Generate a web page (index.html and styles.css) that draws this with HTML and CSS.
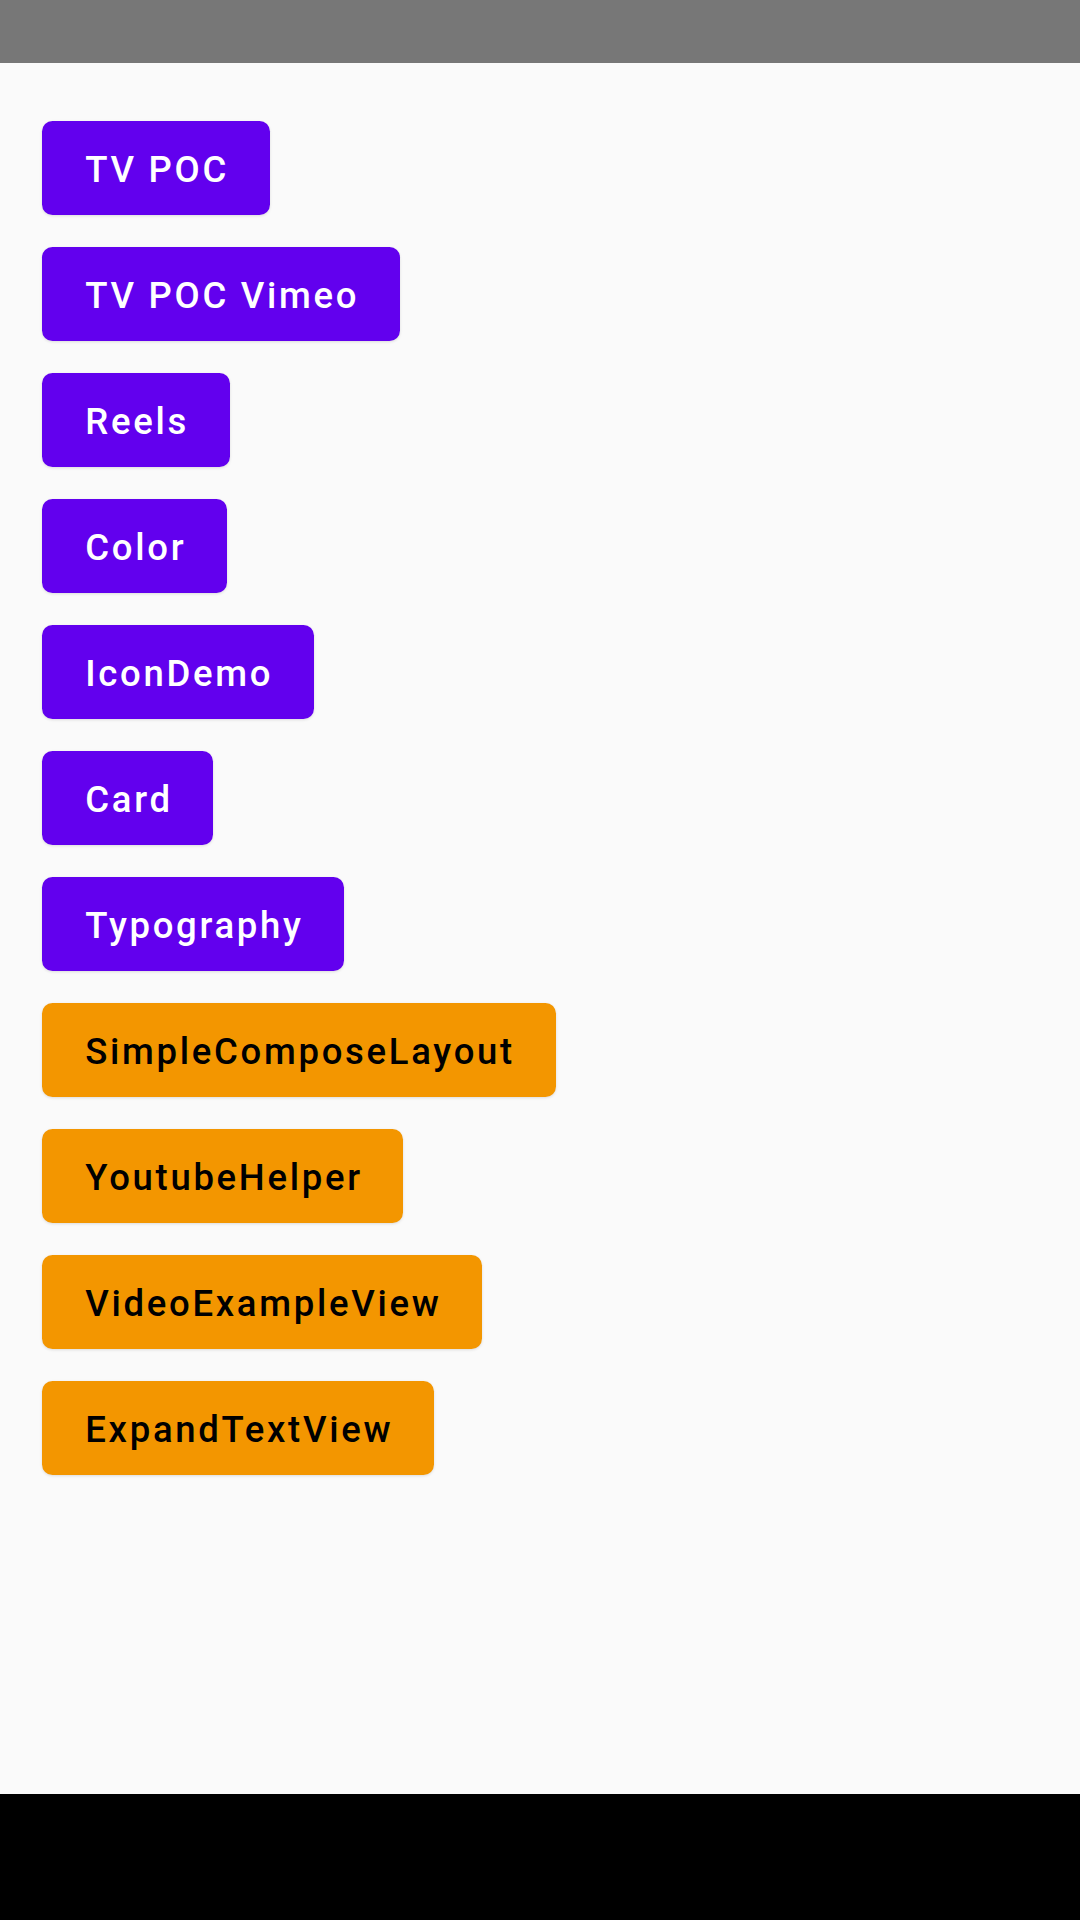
FILE: index.html
```html
<!DOCTYPE html>
<html>
<head>
<meta charset="utf-8">
<link rel="stylesheet" href="styles.css">
</head>
<body>
<div class="screen">
  <div class="status-bar"></div>
  <main class="content">
    <div class="btn-wrap"><button class="btn primary">TV POC</button></div>
    <div class="btn-wrap"><button class="btn primary">TV POC Vimeo</button></div>
    <div class="btn-wrap"><button class="btn primary">Reels</button></div>
    <div class="btn-wrap"><button class="btn primary">Color</button></div>
    <div class="btn-wrap"><button class="btn primary">IconDemo</button></div>
    <div class="btn-wrap"><button class="btn primary">Card</button></div>
    <div class="btn-wrap"><button class="btn primary">Typography</button></div>
    <div class="btn-wrap"><button class="btn orange">SimpleComposeLayout</button></div>
    <div class="btn-wrap"><button class="btn orange">YoutubeHelper</button></div>
    <div class="btn-wrap"><button class="btn orange">VideoExampleView</button></div>
    <div class="btn-wrap"><button class="btn orange">ExpandTextView</button></div>
  </main>
  <div class="nav-bar"></div>
</div>
</body>
</html>
```

FILE: styles.css
```css
html, body {
  margin: 0;
  padding: 0;
}
body {
  width: 1080px;
  height: 1920px;
  background: #fafafa;
  font-family: Roboto, "Noto Sans", sans-serif;
}
.screen {
  display: flex;
  flex-direction: column;
  height: 1920px;
}
.status-bar {
  height: 63px;
  background: #777777;
  flex: none;
}
.content {
  flex: 1;
  display: flex;
  flex-direction: column;
  align-items: flex-start;
  padding: 42px;
  background: #fafafa;
}
.btn-wrap {
  padding: 15.75px 0;
}
.btn {
  display: inline-flex;
  align-items: center;
  justify-content: center;
  box-sizing: border-box;
  height: 94.5px;
  padding: 4px 40.7px 0 43.3px;
  border: none;
  border-radius: 10.5px;
  font-family: Roboto, "Noto Sans", sans-serif;
  font-weight: 500;
  font-size: 36.5px;
  letter-spacing: 2.7px;
  line-height: 1;
  box-shadow: 0 1px 3px rgba(0,0,0,0.12);
}
.primary {
  background: #6200ee;
  color: #ffffff;
}
.orange {
  background: #f39600;
  color: #000000;
}
.nav-bar {
  height: 126px;
  background: #000000;
  flex: none;
}
```
